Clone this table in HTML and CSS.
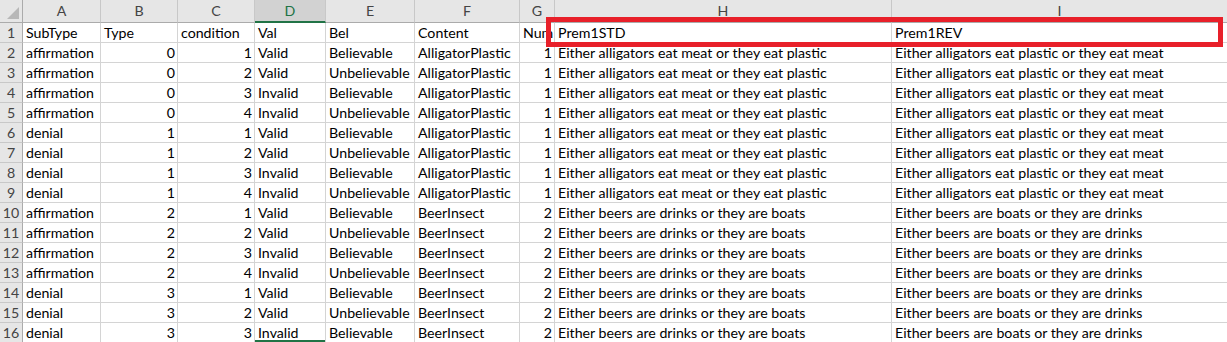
FILE: index.html
```html
<!DOCTYPE html>
<html>
<head>
<meta charset="utf-8">
<link rel="stylesheet" href="styles.css">
</head>
<body>
<div class="sheet">
  <div class="grid">
    <div class="corner"><span class="tri"></span></div>
    <div class="h">A</div><div class="h">B</div><div class="h">C</div><div class="h sel">D</div><div class="h">E</div><div class="h">F</div><div class="h">G</div><div class="h">H</div><div class="h">I</div>

    <div class="r">1</div><div class="c">SubType</div><div class="c">Type</div><div class="c">condition</div><div class="c">Val</div><div class="c">Bel</div><div class="c">Content</div><div class="c">Num</div><div class="c">Prem1STD</div><div class="c">Prem1REV</div>

    <div class="r">2</div><div class="c">affirmation</div><div class="c n">0</div><div class="c n">1</div><div class="c">Valid</div><div class="c">Believable</div><div class="c">AlligatorPlastic</div><div class="c n">1</div><div class="c">Either alligators eat meat or they eat plastic</div><div class="c">Either alligators eat plastic or they eat meat</div>
    <div class="r">3</div><div class="c">affirmation</div><div class="c n">0</div><div class="c n">2</div><div class="c">Valid</div><div class="c">Unbelievable</div><div class="c">AlligatorPlastic</div><div class="c n">1</div><div class="c">Either alligators eat meat or they eat plastic</div><div class="c">Either alligators eat plastic or they eat meat</div>
    <div class="r">4</div><div class="c">affirmation</div><div class="c n">0</div><div class="c n">3</div><div class="c">Invalid</div><div class="c">Believable</div><div class="c">AlligatorPlastic</div><div class="c n">1</div><div class="c">Either alligators eat meat or they eat plastic</div><div class="c">Either alligators eat plastic or they eat meat</div>
    <div class="r">5</div><div class="c">affirmation</div><div class="c n">0</div><div class="c n">4</div><div class="c">Invalid</div><div class="c">Unbelievable</div><div class="c">AlligatorPlastic</div><div class="c n">1</div><div class="c">Either alligators eat meat or they eat plastic</div><div class="c">Either alligators eat plastic or they eat meat</div>
    <div class="r">6</div><div class="c">denial</div><div class="c n">1</div><div class="c n">1</div><div class="c">Valid</div><div class="c">Believable</div><div class="c">AlligatorPlastic</div><div class="c n">1</div><div class="c">Either alligators eat meat or they eat plastic</div><div class="c">Either alligators eat plastic or they eat meat</div>
    <div class="r">7</div><div class="c">denial</div><div class="c n">1</div><div class="c n">2</div><div class="c">Valid</div><div class="c">Unbelievable</div><div class="c">AlligatorPlastic</div><div class="c n">1</div><div class="c">Either alligators eat meat or they eat plastic</div><div class="c">Either alligators eat plastic or they eat meat</div>
    <div class="r">8</div><div class="c">denial</div><div class="c n">1</div><div class="c n">3</div><div class="c">Invalid</div><div class="c">Believable</div><div class="c">AlligatorPlastic</div><div class="c n">1</div><div class="c">Either alligators eat meat or they eat plastic</div><div class="c">Either alligators eat plastic or they eat meat</div>
    <div class="r">9</div><div class="c">denial</div><div class="c n">1</div><div class="c n">4</div><div class="c">Invalid</div><div class="c">Unbelievable</div><div class="c">AlligatorPlastic</div><div class="c n">1</div><div class="c">Either alligators eat meat or they eat plastic</div><div class="c">Either alligators eat plastic or they eat meat</div>
    <div class="r">10</div><div class="c">affirmation</div><div class="c n">2</div><div class="c n">1</div><div class="c">Valid</div><div class="c">Believable</div><div class="c">BeerInsect</div><div class="c n">2</div><div class="c">Either beers are drinks or they are boats</div><div class="c">Either beers are boats or they are drinks</div>
    <div class="r">11</div><div class="c">affirmation</div><div class="c n">2</div><div class="c n">2</div><div class="c">Valid</div><div class="c">Unbelievable</div><div class="c">BeerInsect</div><div class="c n">2</div><div class="c">Either beers are drinks or they are boats</div><div class="c">Either beers are boats or they are drinks</div>
    <div class="r">12</div><div class="c">affirmation</div><div class="c n">2</div><div class="c n">3</div><div class="c">Invalid</div><div class="c">Believable</div><div class="c">BeerInsect</div><div class="c n">2</div><div class="c">Either beers are drinks or they are boats</div><div class="c">Either beers are boats or they are drinks</div>
    <div class="r">13</div><div class="c">affirmation</div><div class="c n">2</div><div class="c n">4</div><div class="c">Invalid</div><div class="c">Unbelievable</div><div class="c">BeerInsect</div><div class="c n">2</div><div class="c">Either beers are drinks or they are boats</div><div class="c">Either beers are boats or they are drinks</div>
    <div class="r">14</div><div class="c">denial</div><div class="c n">3</div><div class="c n">1</div><div class="c">Valid</div><div class="c">Believable</div><div class="c">BeerInsect</div><div class="c n">2</div><div class="c">Either beers are drinks or they are boats</div><div class="c">Either beers are boats or they are drinks</div>
    <div class="r">15</div><div class="c">denial</div><div class="c n">3</div><div class="c n">2</div><div class="c">Valid</div><div class="c">Unbelievable</div><div class="c">BeerInsect</div><div class="c n">2</div><div class="c">Either beers are drinks or they are boats</div><div class="c">Either beers are boats or they are drinks</div>
    <div class="r">16</div><div class="c">denial</div><div class="c n">3</div><div class="c n">3</div><div class="c active-edge">Invalid</div><div class="c">Believable</div><div class="c">BeerInsect</div><div class="c n">2</div><div class="c">Either beers are drinks or they are boats</div><div class="c">Either beers are boats or they are drinks</div>
  </div>
  <div class="highlight"></div>
</div>
</body>
</html>
```

FILE: styles.css
```css
html, body {
  margin: 0;
  padding: 0;
  background: #ffffff;
  overflow: hidden;
}

.sheet {
  position: relative;
  width: 1227px;
  height: 342px;
  overflow: hidden;
}

.grid {
  display: grid;
  grid-template-columns: 23px 78px 77px 77px 71px 89px 105px 35px 337px 336px;
  grid-template-rows: 23px;
  grid-auto-rows: 20px;
  font-family: Lato, "Open Sans", sans-serif;
  font-size: 14.2px;
  color: #000000;
}

.grid > div {
  box-sizing: border-box;
  overflow: hidden;
  white-space: nowrap;
}

.corner {
  position: relative;
  background: #e6e6e6;
  border-right: 1px solid #ababab;
  border-bottom: 1px solid #ababab;
}

.tri {
  position: absolute;
  right: 3px;
  bottom: 3px;
  width: 0;
  height: 0;
  border-left: 12px solid transparent;
  border-bottom: 12px solid #b8b8b8;
}

.h {
  background: #e6e6e6;
  border-right: 1px solid #c8c8c8;
  border-bottom: 1px solid #ababab;
  color: #444444;
  text-align: center;
  line-height: 22px;
}

.h.sel {
  background: #d2d2d2;
  color: #217346;
  border-bottom: 2px solid #217346;
  line-height: 21px;
}

.r {
  background: #e6e6e6;
  border-right: 1px solid #ababab;
  border-bottom: 1px solid #c8c8c8;
  color: #444444;
  text-align: center;
  line-height: 19px;
}

.c {
  border-right: 1px solid #d4d4d4;
  border-bottom: 1px solid #d4d4d4;
  padding: 0 2px 0 3px;
  line-height: 19px;
}

.c.n {
  text-align: right;
}

.active-edge {
  box-shadow: inset 0 -2px 0 #217346;
}

.highlight {
  position: absolute;
  left: 546px;
  top: 17px;
  width: 677px;
  height: 30px;
  box-sizing: border-box;
  border: 5px solid #e8202a;
}
```
